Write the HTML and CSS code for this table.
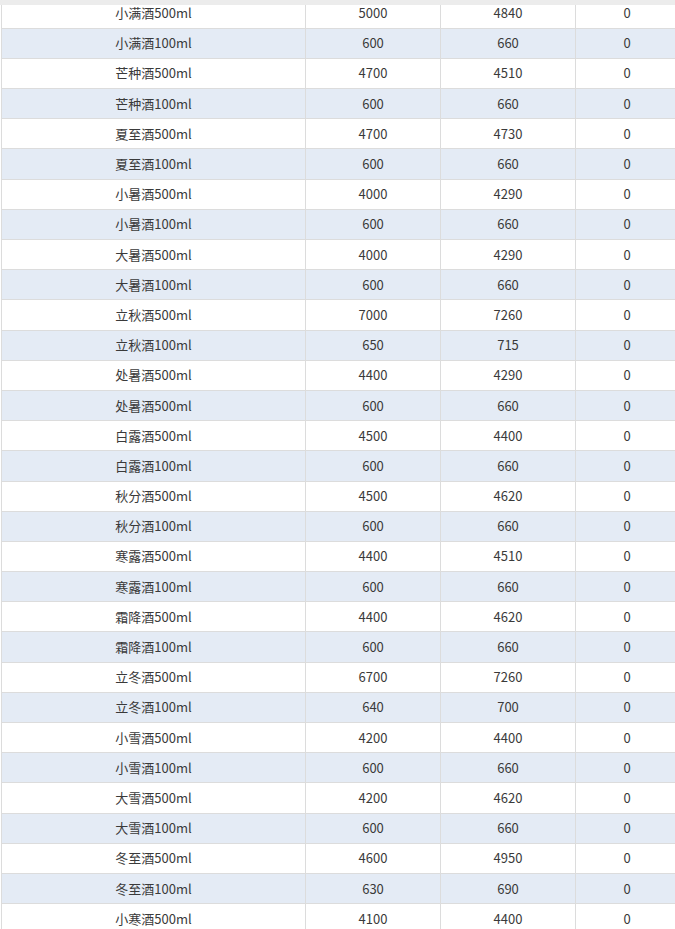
FILE: index.html
```html
<!DOCTYPE html>
<html lang="zh">
<head>
<meta charset="utf-8">
<link rel="stylesheet" href="styles.css">
</head>
<body>
<div class="band"></div>
<div class="viewport">
  <div class="table">
    <div class="row"><div class="cell">小满酒500ml</div><div class="cell">5000</div><div class="cell">4840</div><div class="cell">0</div></div>
    <div class="row alt"><div class="cell">小满酒100ml</div><div class="cell">600</div><div class="cell">660</div><div class="cell">0</div></div>
    <div class="row"><div class="cell">芒种酒500ml</div><div class="cell">4700</div><div class="cell">4510</div><div class="cell">0</div></div>
    <div class="row alt"><div class="cell">芒种酒100ml</div><div class="cell">600</div><div class="cell">660</div><div class="cell">0</div></div>
    <div class="row"><div class="cell">夏至酒500ml</div><div class="cell">4700</div><div class="cell">4730</div><div class="cell">0</div></div>
    <div class="row alt"><div class="cell">夏至酒100ml</div><div class="cell">600</div><div class="cell">660</div><div class="cell">0</div></div>
    <div class="row"><div class="cell">小暑酒500ml</div><div class="cell">4000</div><div class="cell">4290</div><div class="cell">0</div></div>
    <div class="row alt"><div class="cell">小暑酒100ml</div><div class="cell">600</div><div class="cell">660</div><div class="cell">0</div></div>
    <div class="row"><div class="cell">大暑酒500ml</div><div class="cell">4000</div><div class="cell">4290</div><div class="cell">0</div></div>
    <div class="row alt"><div class="cell">大暑酒100ml</div><div class="cell">600</div><div class="cell">660</div><div class="cell">0</div></div>
    <div class="row"><div class="cell">立秋酒500ml</div><div class="cell">7000</div><div class="cell">7260</div><div class="cell">0</div></div>
    <div class="row alt"><div class="cell">立秋酒100ml</div><div class="cell">650</div><div class="cell">715</div><div class="cell">0</div></div>
    <div class="row"><div class="cell">处暑酒500ml</div><div class="cell">4400</div><div class="cell">4290</div><div class="cell">0</div></div>
    <div class="row alt"><div class="cell">处暑酒500ml</div><div class="cell">600</div><div class="cell">660</div><div class="cell">0</div></div>
    <div class="row"><div class="cell">白露酒500ml</div><div class="cell">4500</div><div class="cell">4400</div><div class="cell">0</div></div>
    <div class="row alt"><div class="cell">白露酒100ml</div><div class="cell">600</div><div class="cell">660</div><div class="cell">0</div></div>
    <div class="row"><div class="cell">秋分酒500ml</div><div class="cell">4500</div><div class="cell">4620</div><div class="cell">0</div></div>
    <div class="row alt"><div class="cell">秋分酒100ml</div><div class="cell">600</div><div class="cell">660</div><div class="cell">0</div></div>
    <div class="row"><div class="cell">寒露酒500ml</div><div class="cell">4400</div><div class="cell">4510</div><div class="cell">0</div></div>
    <div class="row alt"><div class="cell">寒露酒100ml</div><div class="cell">600</div><div class="cell">660</div><div class="cell">0</div></div>
    <div class="row"><div class="cell">霜降酒500ml</div><div class="cell">4400</div><div class="cell">4620</div><div class="cell">0</div></div>
    <div class="row alt"><div class="cell">霜降酒100ml</div><div class="cell">600</div><div class="cell">660</div><div class="cell">0</div></div>
    <div class="row"><div class="cell">立冬酒500ml</div><div class="cell">6700</div><div class="cell">7260</div><div class="cell">0</div></div>
    <div class="row alt"><div class="cell">立冬酒100ml</div><div class="cell">640</div><div class="cell">700</div><div class="cell">0</div></div>
    <div class="row"><div class="cell">小雪酒500ml</div><div class="cell">4200</div><div class="cell">4400</div><div class="cell">0</div></div>
    <div class="row alt"><div class="cell">小雪酒100ml</div><div class="cell">600</div><div class="cell">660</div><div class="cell">0</div></div>
    <div class="row"><div class="cell">大雪酒500ml</div><div class="cell">4200</div><div class="cell">4620</div><div class="cell">0</div></div>
    <div class="row alt"><div class="cell">大雪酒100ml</div><div class="cell">600</div><div class="cell">660</div><div class="cell">0</div></div>
    <div class="row"><div class="cell">冬至酒500ml</div><div class="cell">4600</div><div class="cell">4950</div><div class="cell">0</div></div>
    <div class="row alt"><div class="cell">冬至酒100ml</div><div class="cell">630</div><div class="cell">690</div><div class="cell">0</div></div>
    <div class="row"><div class="cell">小寒酒500ml</div><div class="cell">4100</div><div class="cell">4400</div><div class="cell">0</div></div>
  </div>
</div>
</body>
</html>
```
FILE: styles.css
```css
html, body {
  margin: 0;
  padding: 0;
  background: #ffffff;
  overflow: hidden;
}
body {
  width: 675px;
  height: 929px;
  font-family: "Noto Sans CJK SC", "Open Sans", sans-serif;
  font-size: 13px;
  color: #3a3a3a;
}
.band {
  height: 4.5px;
  background: #ececec;
}
.viewport {
  height: 924.5px;
  overflow: hidden;
  padding-left: 1px;
}
.table {
  width: 676px;
  margin-top: -6px;
  border-left: 1px solid #dcdcdc;
}
.row {
  display: grid;
  grid-template-columns: 303px 135px 135px 1fr;
  height: 30.2px;
  box-sizing: border-box;
  border-bottom: 1px solid #dcdcdc;
  background: #ffffff;
}
.row.alt {
  background: #e4ebf5;
}
.cell {
  display: flex;
  align-items: center;
  justify-content: center;
  line-height: 1;
  padding-bottom: 1px;
}
.cell + .cell {
  border-left: 1px solid #dcdcdc;
}
```
